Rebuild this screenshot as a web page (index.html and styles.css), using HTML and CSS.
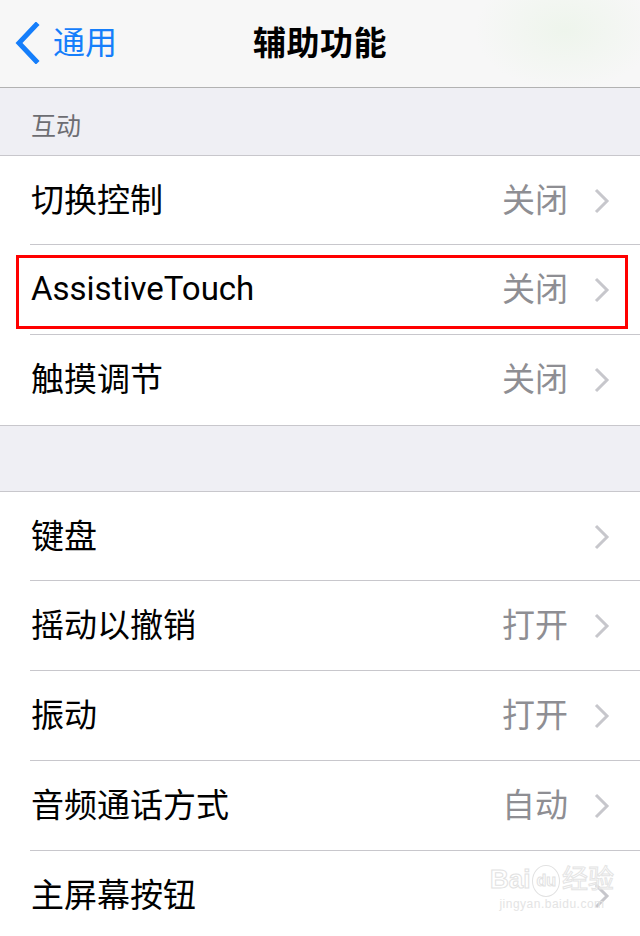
FILE: index.html
```html
<!DOCTYPE html>
<html lang="zh-CN">
<head>
<meta charset="utf-8">
<title>辅助功能</title>
<link rel="stylesheet" href="styles.css">
</head>
<body>
<div class="screen">
  <header class="navbar">
    <div class="back">
      <svg class="back-icon" width="28" height="42" viewBox="0 0 28 42"><polyline points="22,3 5,21 22,39" fill="none" stroke="#157efb" stroke-width="5" stroke-linecap="square"/></svg>
      <span class="back-text">通用</span>
    </div>
    <div class="title">辅助功能</div>
  </header>

  <div class="section-header">互动</div>
  <ul class="group">
    <li class="row"><span class="label">切换控制</span><span class="value">关闭</span><svg class="chev" width="16" height="26" viewBox="0 0 16 26"><polyline points="2,2 13,13 2,24" fill="none" stroke="#c7c7cc" stroke-width="3"/></svg></li>
    <li class="row highlighted"><span class="label latin">AssistiveTouch</span><span class="value">关闭</span><svg class="chev" width="16" height="26" viewBox="0 0 16 26"><polyline points="2,2 13,13 2,24" fill="none" stroke="#c7c7cc" stroke-width="3"/></svg><span class="mark"></span></li>
    <li class="row"><span class="label">触摸调节</span><span class="value">关闭</span><svg class="chev" width="16" height="26" viewBox="0 0 16 26"><polyline points="2,2 13,13 2,24" fill="none" stroke="#c7c7cc" stroke-width="3"/></svg></li>
  </ul>

  <div class="spacer"></div>
  <ul class="group">
    <li class="row"><span class="label">键盘</span><span class="value"></span><svg class="chev" width="16" height="26" viewBox="0 0 16 26"><polyline points="2,2 13,13 2,24" fill="none" stroke="#c7c7cc" stroke-width="3"/></svg></li>
    <li class="row"><span class="label">摇动以撤销</span><span class="value">打开</span><svg class="chev" width="16" height="26" viewBox="0 0 16 26"><polyline points="2,2 13,13 2,24" fill="none" stroke="#c7c7cc" stroke-width="3"/></svg></li>
    <li class="row"><span class="label">振动</span><span class="value">打开</span><svg class="chev" width="16" height="26" viewBox="0 0 16 26"><polyline points="2,2 13,13 2,24" fill="none" stroke="#c7c7cc" stroke-width="3"/></svg></li>
    <li class="row"><span class="label">音频通话方式</span><span class="value">自动</span><svg class="chev" width="16" height="26" viewBox="0 0 16 26"><polyline points="2,2 13,13 2,24" fill="none" stroke="#c7c7cc" stroke-width="3"/></svg></li>
    <li class="row"><span class="label">主屏幕按钮</span><span class="value"></span><svg class="chev" width="16" height="26" viewBox="0 0 16 26"><polyline points="2,2 13,13 2,24" fill="none" stroke="#c7c7cc" stroke-width="3"/></svg></li>
  </ul>

  <div class="watermark">
    <div class="wm-top">Bai<span class="wm-du">du</span><span class="wm-cn">经验</span></div>
    <div class="wm-url">jingyan.baidu.com</div>
  </div>
</div>
</body>
</html>
```

FILE: styles.css
```css
* { box-sizing: border-box; }
html, body { margin: 0; padding: 0; }
body {
  width: 640px;
  height: 936px;
  overflow: hidden;
  background: #efeff4;
  font-family: "Noto Sans CJK SC", "Noto Sans", sans-serif;
}
.screen {
  position: relative;
  width: 640px;
  height: 936px;
  overflow: hidden;
}
.navbar {
  position: relative;
  height: 88px;
  padding-bottom: 6px;
  background: radial-gradient(ellipse 90px 60px at 565px 30px, #eef5ec 0%, rgba(247,247,247,0) 100%), #f7f7f7;
  border-bottom: 1px solid #b2b2b2;
  display: flex;
  align-items: center;
  justify-content: center;
}
.back {
  position: absolute;
  left: 14px;
  top: 22px;
  display: flex;
  align-items: center;
  gap: 11px;
}
.back-icon { display: block; }
.back-text {
  color: #157efb;
  font-size: 32px;
  line-height: 42px;
  position: relative;
  top: -3px;
}
.title {
  font-size: 33px;
  font-weight: 700;
  color: #000;
  letter-spacing: 0.5px;
}
.section-header {
  height: 68px;
  padding: 20px 0 0 31px;
  font-size: 25px;
  color: #6d6d72;
  line-height: 32px;
  border-bottom: 1px solid #c8c7cc;
}
.group {
  list-style: none;
  margin: 0;
  padding: 0;
  background: #fff;
  border-bottom: 1px solid #c8c7cc;
}
.spacer {
  height: 66px;
  border-bottom: 1px solid #c8c7cc;
}
.row {
  position: relative;
  height: 90px;
  display: flex;
  align-items: center;
  padding: 0 30px 0 31px;
}
.row + .row::before {
  content: "";
  position: absolute;
  left: 30px;
  right: 0;
  top: -1px;
  height: 1px;
  background: #c8c7cc;
}
.row:first-child { height: 89px; }
.label {
  flex: 1;
  font-size: 33px;
  color: #000;
  line-height: 40px;
  position: relative;
  top: -3px;
}
.latin {
  font-family: "Roboto", "Noto Sans", sans-serif;
  font-size: 33px;
  top: -1px;
}
.value {
  font-size: 33px;
  color: #8e8e93;
  line-height: 40px;
  margin-right: 26px;
  position: relative;
  top: -3px;
}
.chev { display: block; }
.mark {
  position: absolute;
  left: 16px;
  top: 10px;
  width: 612px;
  height: 74px;
  border: 3px solid #ff0000;
}
.watermark {
  position: absolute;
  left: 490px;
  top: 862px;
  text-align: center;
  pointer-events: none;
}
.wm-top {
  font-family: "Liberation Sans", sans-serif;
  font-size: 26px;
  font-weight: 700;
  line-height: 30px;
  color: rgba(255,255,255,0.85);
  -webkit-text-stroke: 1px #e2e2e2;
}
.wm-cn {
  font-family: "Noto Sans CJK SC", sans-serif;
  font-weight: 400;
  color: rgba(255,255,255,0.6);
  -webkit-text-stroke: 1px #e4e4e4;
}
.wm-du {
  display: inline-block;
  font-size: 16px;
  border: 1px solid #e2e2e2;
  border-radius: 50%;
  padding: 0 3px;
  margin: 0 2px;
  vertical-align: middle;
}
.wm-url {
  font-family: "Liberation Sans", sans-serif;
  font-size: 12px;
  color: #e4e4e4;
  letter-spacing: 0.5px;
}
```
